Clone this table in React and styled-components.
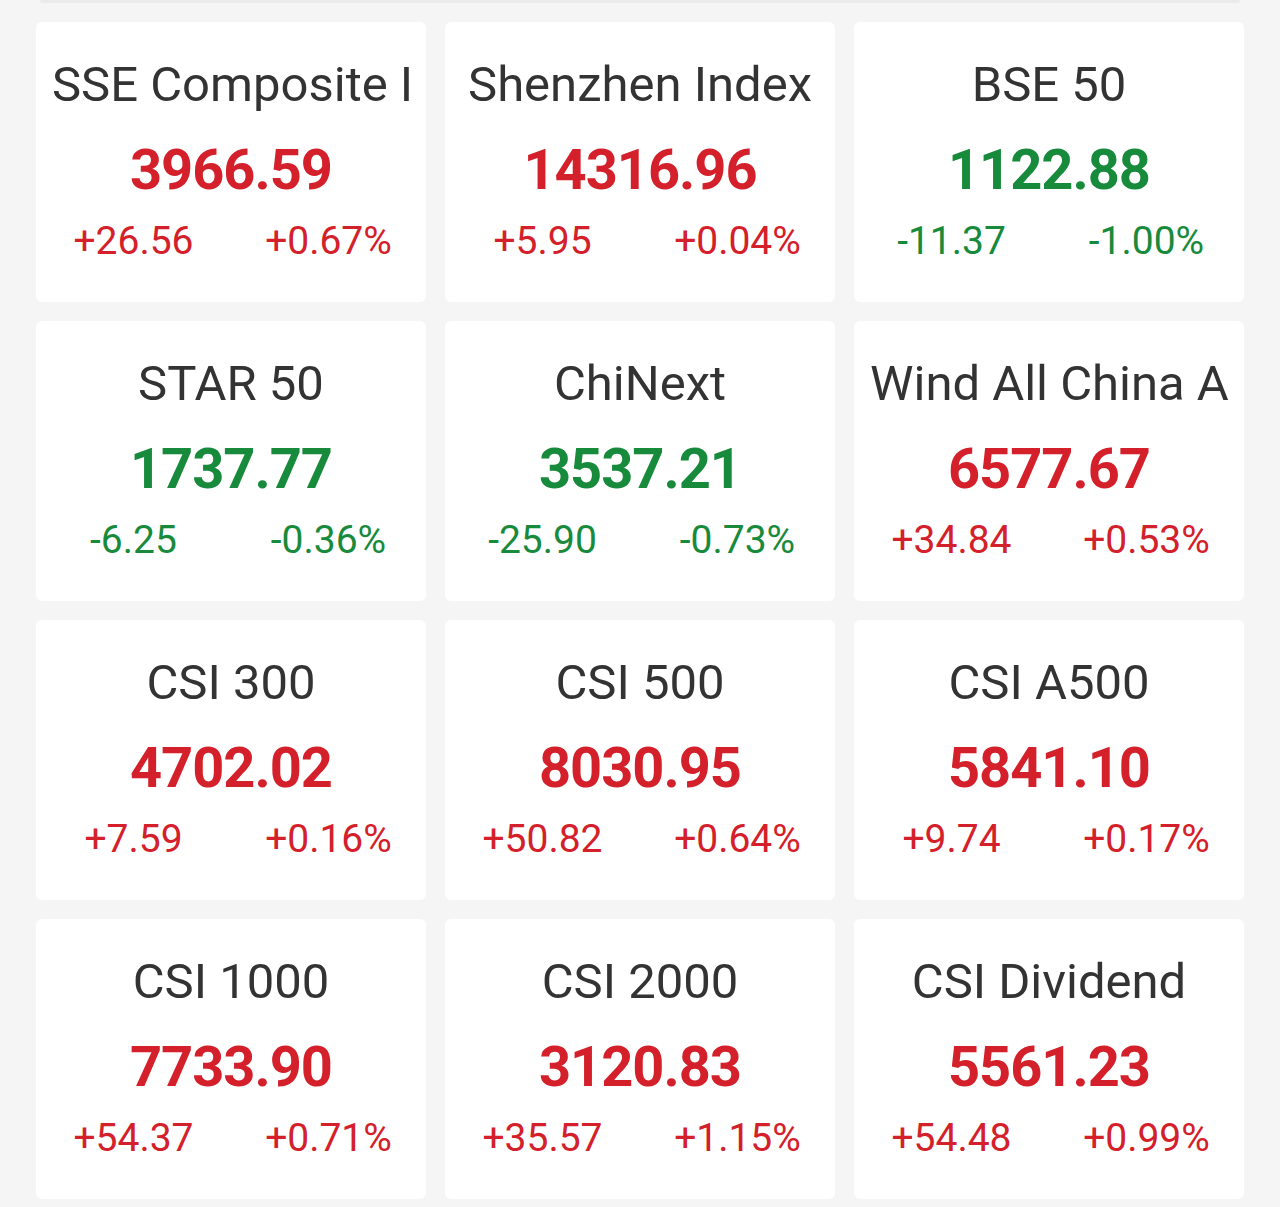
import React from 'react'
import styled, { createGlobalStyle } from 'styled-components'

const indices = [
  { name: 'SSE Composite Index', value: '3966.59', change: '+26.56', pct: '+0.67%' },
  { name: 'Shenzhen Index', value: '14316.96', change: '+5.95', pct: '+0.04%' },
  { name: 'BSE 50', value: '1122.88', change: '-11.37', pct: '-1.00%' },
  { name: 'STAR 50', value: '1737.77', change: '-6.25', pct: '-0.36%' },
  { name: 'ChiNext', value: '3537.21', change: '-25.90', pct: '-0.73%' },
  { name: 'Wind All China A', value: '6577.67', change: '+34.84', pct: '+0.53%' },
  { name: 'CSI 300', value: '4702.02', change: '+7.59', pct: '+0.16%' },
  { name: 'CSI 500', value: '8030.95', change: '+50.82', pct: '+0.64%' },
  { name: 'CSI A500', value: '5841.10', change: '+9.74', pct: '+0.17%' },
  { name: 'CSI 1000', value: '7733.90', change: '+54.37', pct: '+0.71%' },
  { name: 'CSI 2000', value: '3120.83', change: '+35.57', pct: '+1.15%' },
  { name: 'CSI Dividend', value: '5561.23', change: '+54.48', pct: '+0.99%' },
]

export default function App() {
  return (
    <Page>
      <GlobalStyle />
      <TopEdge />
      <Grid>
        {indices.map((item) => {
          const down = item.change.startsWith('-')
          return (
            <Card key={item.name}>
              <Name>{item.name}</Name>
              <Value $down={down}>{item.value}</Value>
              <Changes $down={down}>
                <Change>{item.change}</Change>
                <Change>{item.pct}</Change>
              </Changes>
            </Card>
          )
        })}
      </Grid>
    </Page>
  )
}

const GlobalStyle = createGlobalStyle`
  html, body {
    margin: 0;
    padding: 0;
    background: #f5f5f5;
    font-family: Roboto, "Noto Sans", sans-serif;
  }
`

const Page = styled.div`
  width: 1280px;
  min-height: 1207px;
  background: #f5f5f5;
`

const TopEdge = styled.div`
  height: 3px;
  margin: 0 40px;
  background: #ebebeb;
  border-radius: 0 0 6px 6px;
`

const Grid = styled.div`
  display: grid;
  grid-template-columns: repeat(3, 390px);
  grid-auto-rows: 280px;
  gap: 19px;
  padding: 19px 36px 0;
`

const Card = styled.div`
  background: #fff;
  border-radius: 6px;
  display: flex;
  flex-direction: column;
  align-items: stretch;
  padding-top: 34px;
`

const Name = styled.div`
  margin: 0 16px;
  font-size: 49px;
  line-height: 58px;
  color: #333;
  text-align: center;
  white-space: nowrap;
  overflow: hidden;
`

const Value = styled.div`
  margin-top: 24px;
  font-size: 56px;
  font-weight: 700;
  letter-spacing: -1px;
  line-height: 64px;
  text-align: center;
  color: ${(p) => (p.$down ? '#188a3c' : '#d4202a')};
`

const Changes = styled.div`
  margin-top: 15px;
  display: flex;
  color: ${(p) => (p.$down ? '#188a3c' : '#d4202a')};
`

const Change = styled.div`
  flex: 1;
  text-align: center;
  font-size: 39px;
  line-height: 48px;
`
